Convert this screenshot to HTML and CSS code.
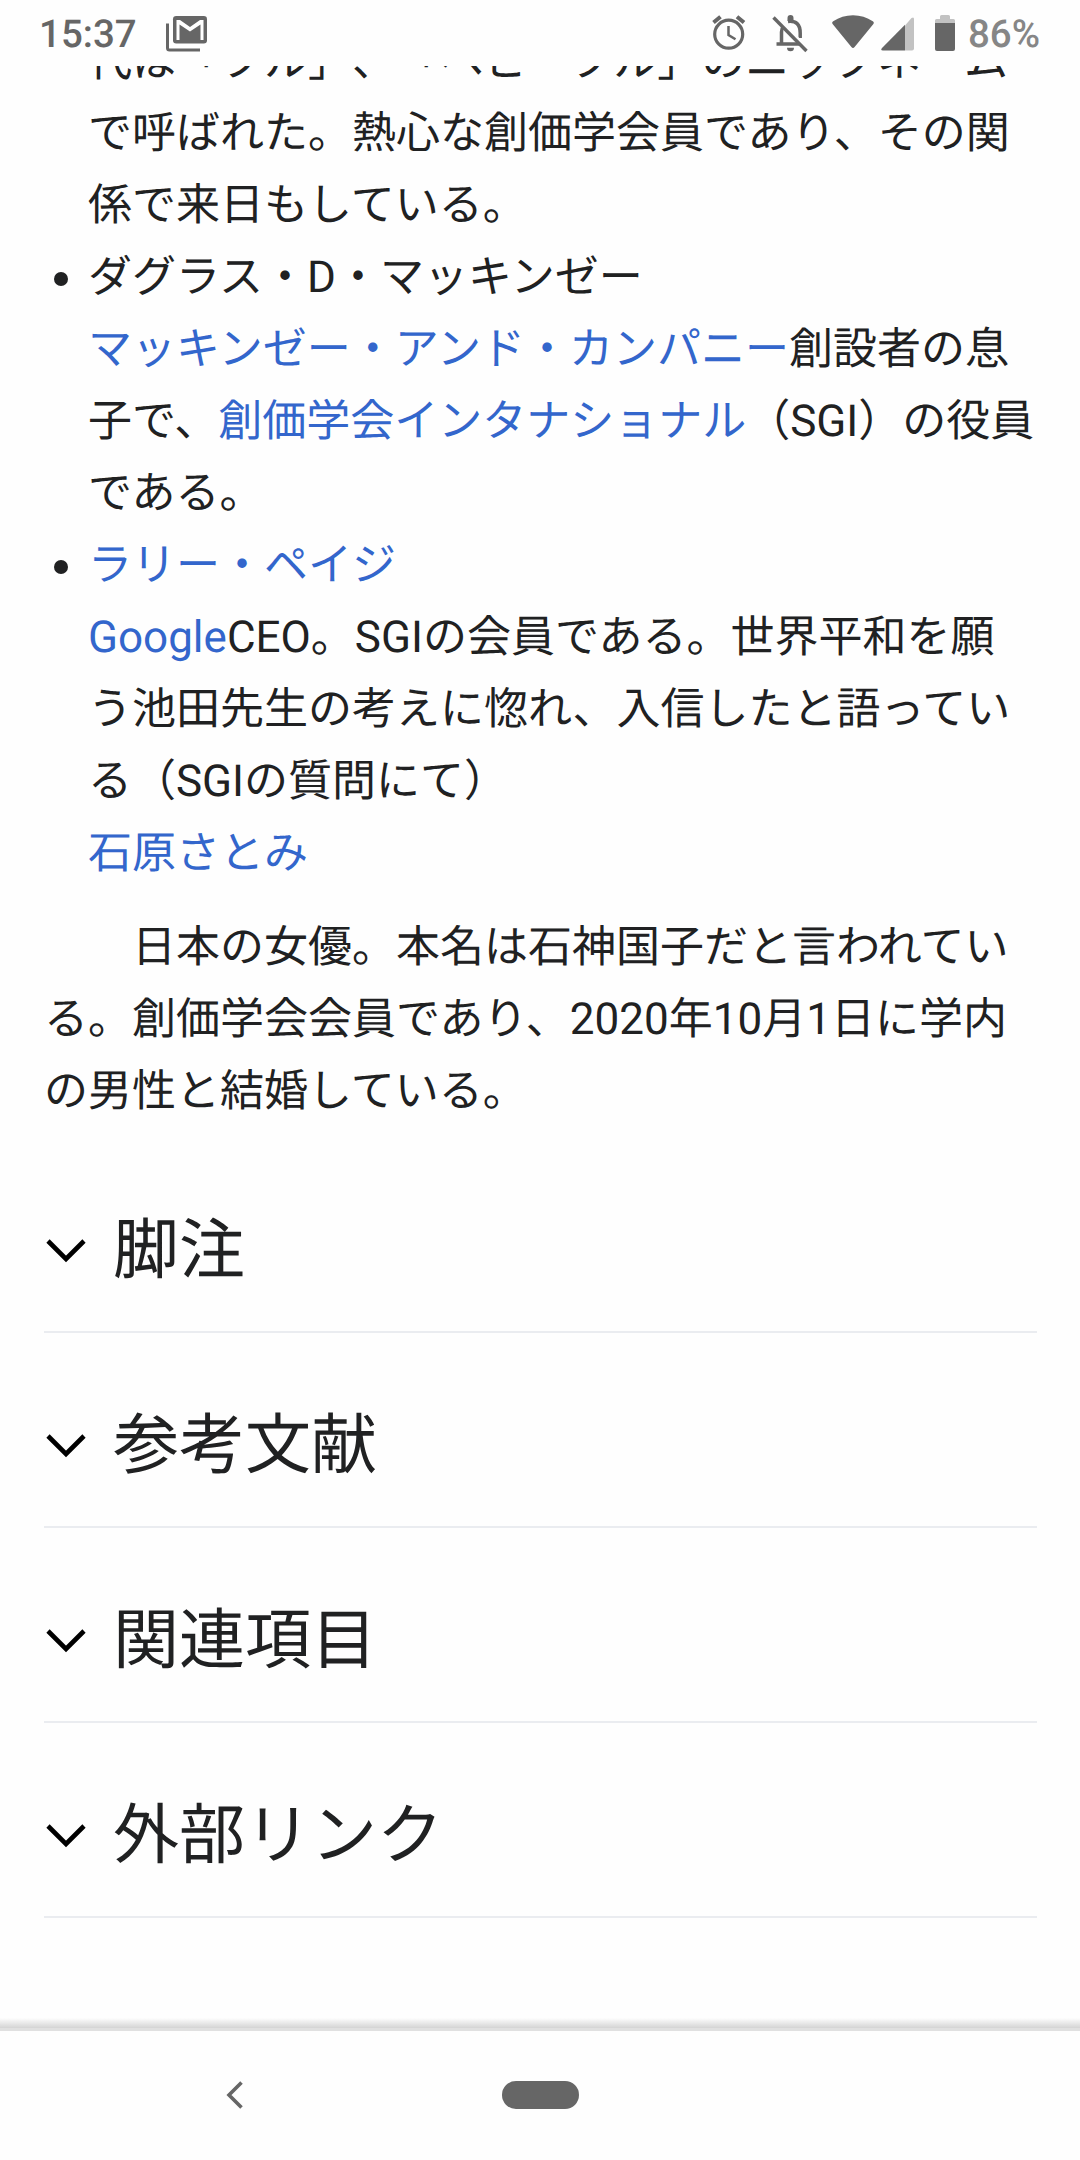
FILE: index.html
```html
<!DOCTYPE html>
<html lang="ja">
<head>
  <meta charset="UTF-8">
  <meta name="viewport" content="width=device-width, initial-scale=1.0">
  <title>創価学会員の一覧</title>
  <link rel="stylesheet" href="styles.css">
</head>
<body>
  <div class="screen">
    <header class="status-bar">
      <span class="clock">15:37</span>
      <svg class="icon-mail" width="42" height="36" viewBox="0 0 42 36">
        <path d="M1.5 7.5V32q0 2 2 2H34" fill="none" stroke="#666" stroke-width="3"/>
        <rect x="7" y="0" width="34" height="27.500" rx="3.200" fill="#666"/>
        <path d="M10.500 24V4H14L24 11L34 4H37.500V24H34.500V8.500L24 15.500L13.500 8.500V24Z" fill="#fff"/>
      </svg>
      <div class="status-icons">
        <svg class="icon-alarm" width="34" height="36" viewBox="0 0 34 36" fill="none" stroke="#666">
          <circle cx="16.700" cy="19.200" r="14" stroke-width="3.200"/>
          <path d="M1.500 7.500L8.500 1.700M32 7.500L25 1.700" stroke-width="4"/>
          <path d="M16.500 11V20L23.500 24.300" stroke-width="2.500"/>
        </svg>
        <svg class="icon-bell" width="36" height="38" viewBox="0 0 36 38">
          <path d="M4.500 29H28M9.500 29V17Q9.500 14 11.500 11M16 6.500Q28.200 5 28.200 18V23" fill="none" stroke="#666" stroke-width="3.500"/>
          <path d="M15.500 6V3a3 3 0 0 1 6 0V6ZM15 32.800H22a3.500 3.500 0 0 1-7 0Z" fill="#666"/>
          <path d="M3 .8L36 33.800" stroke="#fefefe" stroke-width="3"/>
          <path d="M1.500 2.500L34.500 36" stroke="#666" stroke-width="3.400"/>
        </svg>
        <svg class="icon-wifi" width="42" height="34" viewBox="0 0 42 34">
          <path d="M.6 9Q-.5 7.500 1.200 6.300Q10 .3 21 .3T40.800 6.300Q42.500 7.500 41.400 9L22.600 32Q21 34 19.400 32Z" fill="#666"/>
        </svg>
        <svg class="icon-signal" width="33" height="34" viewBox="0 0 33 34">
          <path d="M24 8.500L30.500 1Q33 -.6 33 2V31.500Q33 33.500 31 33.500H24Z" fill="#c2c2c2"/>
          <path d="M24 7.800V33.500H2Q-1 33.500 1 31Z" fill="#666"/>
        </svg>
        <svg class="icon-battery" width="20" height="36" viewBox="0 0 20 36">
          <path d="M0 8.500V5.500Q0 4 1.500 4H5V1.500Q5 0 6.500 0H13.500Q15 0 15 1.500V4H18.500Q20 4 20 5.500V8.500Z" fill="#c2c2c2"/>
          <path d="M0 8H20V34Q20 36 18 36H2Q0 36 0 34Z" fill="#666"/>
        </svg>
        <span class="battery-level">86%</span>
      </div>
    </header>

    <main class="article">
      <ul class="people">
        <li class="continued">
          代は「ブル」、「ベビーブル」のニックネーム<br>で呼ばれた。熱心な創価学会員であり、その関<br>係で来日もしている。
        </li>
        <li>
          ダグラス・D・マッキンゼー<br>
          <a class="link">マッキンゼー・アンド・カンパニー</a>創設者の息<br>子で、<a class="link">創価学会インタナショナル</a>（SGI）の役員<br>である。
        </li>
        <li>
          <a class="link">ラリー・ペイジ</a><br>
          <a class="link">Google</a>CEO。SGIの会員である。世界平和を願<br>う池田先生の考えに惚れ、入信したと語ってい<br>る（SGIの質問にて）<br>
          <a class="link">石原さとみ</a>
        </li>
      </ul>
      <p class="note">　　日本の女優。本名は石神国子だと言われてい<br>る。創価学会会員であり、2020年10月1日に学内<br>の男性と結婚している。</p>

      <section class="section">
        <svg class="chevron" width="40" height="24" viewBox="0 0 40 24"><path d="M2 2L20 20L38 2" fill="none" stroke="#000" stroke-width="4.600"/></svg>
        <h2>脚注</h2>
      </section>
      <section class="section">
        <svg class="chevron" width="40" height="24" viewBox="0 0 40 24"><path d="M2 2L20 20L38 2" fill="none" stroke="#000" stroke-width="4.600"/></svg>
        <h2>参考文献</h2>
      </section>
      <section class="section">
        <svg class="chevron" width="40" height="24" viewBox="0 0 40 24"><path d="M2 2L20 20L38 2" fill="none" stroke="#000" stroke-width="4.600"/></svg>
        <h2>関連項目</h2>
      </section>
      <section class="section">
        <svg class="chevron" width="40" height="24" viewBox="0 0 40 24"><path d="M2 2L20 20L38 2" fill="none" stroke="#000" stroke-width="4.600"/></svg>
        <h2>外部リンク</h2>
      </section>
    </main>

    <div class="shadow"></div>
    <nav class="nav-bar">
      <svg class="back" width="18" height="28" viewBox="0 0 18 28"><path d="M15.500 1.500L3 14L15.500 26.500" fill="none" stroke="#666" stroke-width="3.600"/></svg>
      <div class="home-pill"></div>
    </nav>
  </div>
</body>
</html>
```
FILE: styles.css
```css
* {
  box-sizing: border-box;
}

body {
  margin: 0;
  background: #fefefe;
  color: #202122;
  font-family: Roboto, "Noto Sans CJK JP", sans-serif;
  text-rendering: geometricPrecision;
  text-spacing-trim: space-all;
}

.screen {
  display: flex;
  flex-direction: column;
  width: 1080px;
  height: 2160px;
  overflow: hidden;
}

/* Status bar */
.status-bar {
  display: flex;
  align-items: flex-start;
  flex: none;
  height: 66px;
  padding: 0 40px 0 39px;
  color: #666;
  font-size: 38.5px;
  font-weight: 500;
  line-height: 69px;
}

.clock {
  width: 127px;
}

.icon-mail {
  margin-top: 16px;
}

.status-icons {
  display: flex;
  align-items: flex-start;
  margin-left: auto;
}

.icon-alarm {
  margin: 15px 26px 0 0;
}

.icon-bell {
  margin: 15px 24px 0 0;
}

.icon-wifi {
  margin: 15px 7px 0 0;
}

.icon-signal {
  margin: 17px 21px 0 0;
}

.icon-battery {
  margin: 15px 13px 0 0;
}

.battery-level {
  color: #868686;
}

/* Article */
.article {
  flex: 1;
  padding: 0 43px 0 44px;
  overflow: hidden;
}

.people {
  margin: -41px 0 0;
  padding: 0 0 0 44px;
  list-style: none;
  font-size: 44px;
  line-height: 72px;
  white-space: nowrap;
}

.people li {
  position: relative;
}

.people li::before {
  content: "";
  position: absolute;
  top: 31px;
  left: -34px;
  width: 14px;
  height: 14px;
  border-radius: 50%;
  background: #202122;
}

.people .continued::before {
  display: none;
}

.link {
  color: #3366cc;
}

.note {
  margin: 22px 0 11px;
  font-size: 44px;
  line-height: 72px;
  white-space: nowrap;
}

.section {
  display: flex;
  align-items: center;
  height: 195px;
  padding: 32px 0 0 2px;
  border-bottom: 2px solid #eaecf0;
}

.chevron {
  margin-top: 1px;
}

.section h2 {
  margin: 2px 0 0 27px;
  font-size: 66px;
  font-weight: 400;
  line-height: 86px;
}

.shadow {
  flex: none;
  height: 13px;
  border-bottom: 3px solid #e0e0e0;
  background: linear-gradient(#fefefe, #d4d4d4);
}

/* Navigation bar */
.nav-bar {
  display: flex;
  align-items: center;
  flex: none;
  height: 129px;
  padding: 0 0 2px 226px;
}

.home-pill {
  width: 77px;
  height: 28px;
  margin-left: 258px;
  border-radius: 14px;
  background: #666;
}
```
